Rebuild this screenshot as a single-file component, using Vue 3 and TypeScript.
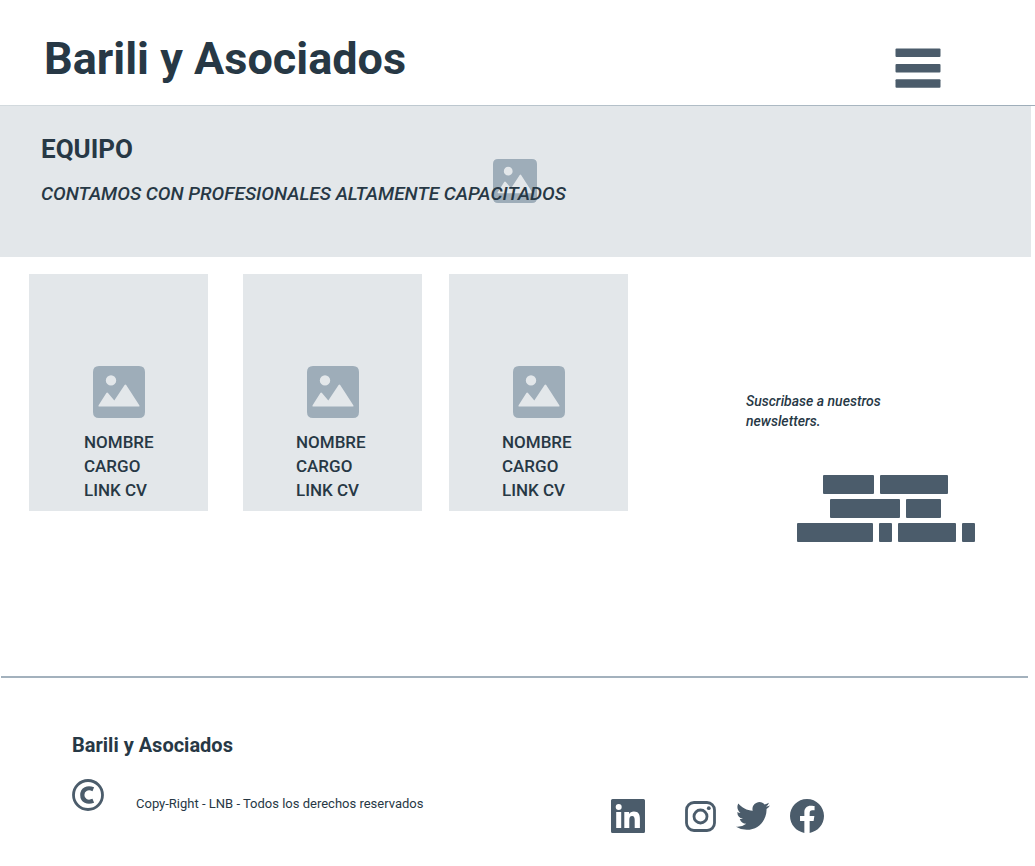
<script setup lang="ts">
interface Member {
  id: number
  name: string
  role: string
  link: string
}

const members: Member[] = [1, 2, 3].map((id) => ({
  id,
  name: 'NOMBRE',
  role: 'CARGO',
  link: 'LINK CV',
}))

// Widths of the placeholder words, row by row
const wordRows: number[][] = [
  [51, 68],
  [70, 35],
  [76, 13, 58, 13],
]
</script>

<template>
  <div class="page">
    <header class="header">
      <h1 class="brand">Barili y Asociados</h1>
      <button class="menu" type="button" aria-label="Menú">
        <svg viewBox="0 0 46 40" aria-hidden="true">
          <rect x="0.5" y="0.5" width="45" height="8.4" rx="1" />
          <rect x="0.5" y="16" width="45" height="8.4" rx="1" />
          <rect x="0.5" y="31.3" width="45" height="8.4" rx="1" />
        </svg>
      </button>
    </header>

    <section class="banner">
      <svg class="banner-picture" viewBox="0 0 52 52" aria-hidden="true">
        <path fill-rule="evenodd" d="M6 0H46Q52 0 52 6V46Q52 52 46 52H6Q0 52 0 46V6Q0 0 6 0ZM18 9.2A5.2 5.2 0 1 0 18 19.6A5.2 5.2 0 1 0 18 9.2ZM6 40.6H46Q47 40.4 46.3 39.2L33.2 19Q32.4 17.9 31.6 19L21.3 34.6L15.2 27.2Q14.1 26 13.2 27.3L5.6 39.2Q5 40.4 6 40.6Z" />
      </svg>
      <h2 class="banner-title">EQUIPO</h2>
      <p class="banner-text">CONTAMOS CON PROFESIONALES ALTAMENTE CAPACITADOS</p>
    </section>

    <main class="content">
      <article v-for="member in members" :key="member.id" class="card">
        <svg class="card-picture" viewBox="0 0 52 52" aria-hidden="true">
          <path fill-rule="evenodd" d="M6 0H46Q52 0 52 6V46Q52 52 46 52H6Q0 52 0 46V6Q0 0 6 0ZM18 9.2A5.2 5.2 0 1 0 18 19.6A5.2 5.2 0 1 0 18 9.2ZM6 40.6H46Q47 40.4 46.3 39.2L33.2 19Q32.4 17.9 31.6 19L21.3 34.6L15.2 27.2Q14.1 26 13.2 27.3L5.6 39.2Q5 40.4 6 40.6Z" />
        </svg>
        <div class="card-text">
          <p>{{ member.name }}</p>
          <p>{{ member.role }}</p>
          <a href="#">{{ member.link }}</a>
        </div>
      </article>

      <aside class="newsletter">
        <p class="newsletter-text">Suscribase a nuestros newsletters.</p>
        <div class="words" aria-hidden="true">
          <div v-for="(row, r) in wordRows" :key="r" class="word-row">
            <span v-for="(width, w) in row" :key="w" class="word" :style="{ width: width + 'px' }"></span>
          </div>
        </div>
      </aside>
    </main>

    <footer class="footer">
      <p class="footer-brand">Barili y Asociados</p>
      <div class="footer-row">
        <svg class="copyright" viewBox="0 0 32 32" aria-hidden="true">
          <circle cx="16" cy="16" r="14.5" stroke-width="2.8" />
          <path d="M21.3 10.2C15.5 7.8 10.3 10.3 10.3 16S15.5 24.2 21.3 21.8" stroke-width="4.2" />
        </svg>
        <p class="legal">Copy-Right - LNB - Todos los derechos reservados</p>
        <nav class="social" aria-label="Redes sociales">
          <a class="linkedin" href="#" aria-label="LinkedIn">
            <svg viewBox="0 0 34 34" aria-hidden="true">
              <path fill-rule="evenodd" d="M1.5 0H32.5Q34 0 34 1.5V32.5Q34 34 32.5 34H1.5Q0 34 0 32.5V1.5Q0 0 1.5 0ZM5.2 13V29H10.2V13ZM7.7 4.9A3 3 0 1 0 7.7 10.9A3 3 0 1 0 7.7 4.9ZM13.3 13V29H18.3V21.2C18.3 18.6 19 17 21.1 17C23.2 17 23.7 18.7 23.7 21.1V29H28.9V20C28.9 15.2 27.4 12.5 22.9 12.5C20.5 12.5 18.9 13.7 18.2 15.1H18.1V13Z" />
            </svg>
          </a>
          <a class="instagram" href="#" aria-label="Instagram">
            <svg viewBox="0 0 31 31" aria-hidden="true">
              <rect x="1.5" y="1.5" width="28" height="28" rx="7.5" fill="none" stroke="currentColor" stroke-width="2.8" />
              <circle cx="15.5" cy="15.5" r="6.5" fill="none" stroke="currentColor" stroke-width="2.8" />
              <circle cx="23.8" cy="7.2" r="1.9" />
            </svg>
          </a>
          <a class="twitter" href="#" aria-label="Twitter">
            <svg viewBox="0 0 24 24" aria-hidden="true">
              <path d="M23.953 4.57a10 10 0 0 1-2.825.775 4.958 4.958 0 0 0 2.163-2.723c-.951.555-2.005.959-3.127 1.184a4.92 4.92 0 0 0-8.384 4.482C7.69 8.095 4.067 6.13 1.64 3.162a4.822 4.822 0 0 0-.666 2.475c0 1.71.87 3.213 2.188 4.096a4.904 4.904 0 0 1-2.228-.616v.06a4.923 4.923 0 0 0 3.946 4.827 4.996 4.996 0 0 1-2.212.085 4.936 4.936 0 0 0 4.604 3.417 9.867 9.867 0 0 1-6.102 2.105c-.39 0-.779-.023-1.17-.067a13.995 13.995 0 0 0 7.557 2.209c9.053 0 13.998-7.496 13.998-13.985 0-.21 0-.42-.015-.63A9.935 9.935 0 0 0 24 4.59z" />
            </svg>
          </a>
          <a class="facebook" href="#" aria-label="Facebook">
            <svg viewBox="0 0 24 24" aria-hidden="true">
              <path d="M24 12.073c0-6.627-5.373-12-12-12s-12 5.373-12 12c0 5.99 4.388 10.954 10.125 11.854v-8.385H7.078v-3.47h3.047V9.43c0-3.007 1.792-4.669 4.533-4.669 1.312 0 2.686.235 2.686.235v2.953H15.83c-1.491 0-1.956.925-1.956 1.874v2.25h3.328l-.532 3.47h-2.796v8.385C19.612 23.027 24 18.062 24 12.073z" />
            </svg>
          </a>
        </nav>
      </div>
    </footer>
  </div>
</template>

<style>
body {
  margin: 0;
  background: #fff;
}
</style>

<style scoped>
.page {
  font-family: Roboto, "Liberation Sans", sans-serif;
  color: #273845;
}

h1,
h2,
p {
  margin: 0;
}

a {
  color: inherit;
  text-decoration: none;
}

svg {
  display: block;
  fill: currentColor;
}

.header {
  display: flex;
  align-items: flex-start;
  justify-content: space-between;
  box-sizing: border-box;
  min-height: 106px;
  padding: 33px 94px 0 44px;
  border-bottom: 1px solid;
  border-image: linear-gradient(90deg, #d3dade, #b4c0c9 60%, #9eadb9) 1;
}

.brand {
  font-size: 45px;
  line-height: 52px;
  font-weight: 700;
}

.menu {
  width: 46px;
  margin-top: 15px;
  padding: 0;
  border: 0;
  background: none;
  color: #4b5c6b;
  cursor: pointer;
}

.banner {
  position: relative;
  box-sizing: border-box;
  min-height: 151px;
  margin-right: 4px;
  padding: 27px 41px;
  background: #e3e7ea;
}

.banner-picture {
  position: absolute;
  inset: 0 1px 1px 0;
  width: 44px;
  margin: auto;
  color: #9eadb9;
}

.banner-title {
  position: relative;
  font-size: 26px;
  line-height: 32px;
  font-weight: 700;
}

.banner-text {
  position: relative;
  margin-top: 17px;
  font-size: 19px;
  line-height: 24px;
  font-weight: 500;
  font-style: italic;
}

.content {
  display: flex;
  align-items: flex-start;
  box-sizing: border-box;
  min-height: 402px;
  padding: 17px 29px 0;
}

.card {
  flex: 0 1 179px;
  box-sizing: border-box;
  min-height: 237px;
  margin-right: 27px;
  padding: 92px 0 9px;
  background: #e3e7ea;
}

.card:first-child {
  margin-right: 35px;
}

.card-picture {
  width: 52px;
  margin: 0 auto;
  color: #9eadb9;
}

.card-text {
  margin: 12px 0 0 53px;
  font-size: 17px;
  line-height: 24px;
  font-weight: 500;
}

.card:first-child .card-text {
  margin-left: 55px;
}

.newsletter {
  flex: 1;
  margin: 117px 0 0 91px;
}

.newsletter-text {
  max-width: 160px;
  font-size: 14px;
  line-height: 20px;
  font-weight: 500;
  font-style: italic;
}

.words {
  display: grid;
  gap: 5px;
  margin: 44px 0 0 19px;
}

.word-row {
  display: flex;
  justify-content: center;
  gap: 6px;
}

.word {
  height: 19px;
  border-radius: 1px;
  background: #4b5c6b;
}

.footer {
  margin: 17px 7px 0 1px;
  padding: 55px 204px 32px 71px;
  border-top: 2px solid #a3b1bd;
}

.footer-brand {
  font-size: 20px;
  line-height: 24px;
  font-weight: 700;
}

.footer-row {
  display: flex;
  align-items: flex-start;
  margin-top: 22px;
}

.copyright {
  width: 32px;
  fill: none;
  stroke: #4b5c6b;
}

.legal {
  margin: 17px 0 0 32px;
  font-size: 13px;
  line-height: 16px;
}

.social {
  display: flex;
  align-items: center;
  margin: 20px 0 0 auto;
  color: #4b5c6b;
}

.linkedin,
.twitter,
.facebook {
  width: 34px;
}

.linkedin {
  margin-right: 40px;
}

.instagram {
  width: 31px;
}

.twitter,
.facebook {
  margin-left: 20px;
}
</style>
